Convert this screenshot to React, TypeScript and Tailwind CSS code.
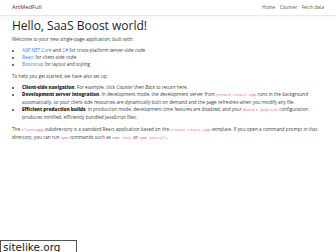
const A = ({ children }: { children: React.ReactNode }) => (
  <a href="#" className="text-[#2f86f5]">
    {children}
  </a>
);

const C = ({ children }: { children: React.ReactNode }) => (
  <code className="font-['Liberation_Mono',monospace] text-[4.2px] text-[#e8609f]">{children}</code>
);

export default function App() {
  return (
    <div className="relative h-[252px] w-[336px] overflow-hidden bg-white font-['Open_Sans',sans-serif] text-[#3a3f44]">
      {/* navbar */}
      <header className="flex h-[16px] items-center justify-between border-b border-[#e6e9ec] bg-white px-[12px] shadow-[0_1px_4px_rgba(0,0,0,0.05)]">
        <span className="text-[5.8px] text-[#333]">ArtMedFull</span>
        <nav className="flex gap-[4.6px] text-[4.6px] text-[#555]">
          <span>Home</span>
          <span>Counter</span>
          <span>Fetch data</span>
        </nav>
      </header>

      <main className="px-[12px] pt-[3px] text-[4.65px] leading-[7px]">
        <h1 className="mb-[2px] text-[12px] font-normal leading-[14.5px] text-[#212529]">Hello, SaaS Boost world!</h1>
        <p className="mb-[4.5px]">Welcome to your new single-page application, built with:</p>
        <ul className="mb-[4.5px] list-disc pl-[10px]">
          <li>
            <A>ASP.NET Core</A> and <A>C#</A> for cross-platform server-side code
          </li>
          <li>
            <A>React</A> for client-side code
          </li>
          <li>
            <A>Bootstrap</A> for layout and styling
          </li>
        </ul>
        <p className="mb-[4.5px]">To help you get started, we have also set up:</p>
        <ul className="mb-[4.5px] list-disc pl-[10px]">
          <li>
            <strong className="font-extrabold text-[#212529]">Client-side navigation</strong>. For example, click{" "}
            <em>Counter</em> then <em>Back</em> to return here.
          </li>
          <li>
            <strong className="font-extrabold text-[#212529]">Development server integration</strong>. In development
            mode, the development server from <C>create-react-app</C> runs in the background automatically, so your
            client-side resources are dynamically built on demand and the page refreshes when you modify any file.
          </li>
          <li>
            <strong className="font-extrabold text-[#212529]">Efficient production builds</strong>. In production mode,
            development-time features are disabled, and your <C>dotnet publish</C> configuration produces minified,
            efficiently bundled JavaScript files.
          </li>
        </ul>
        <p>
          The <C>ClientApp</C> subdirectory is a standard React application based on the <C>create-react-app</C>{" "}
          template. If you open a command prompt in that directory, you can run <C>npm</C> commands such as{" "}
          <C>npm test</C> or <C>npm install</C>.
        </p>
      </main>

      {/* watermark */}
      <div className="absolute bottom-[-2px] left-0 w-[77px] border border-[#555] bg-white pl-[2px] font-['DejaVu_Sans',Verdana,sans-serif] text-[10.5px] leading-[12px] text-[#222]">
        sitelike.org
      </div>
    </div>
  );
}
